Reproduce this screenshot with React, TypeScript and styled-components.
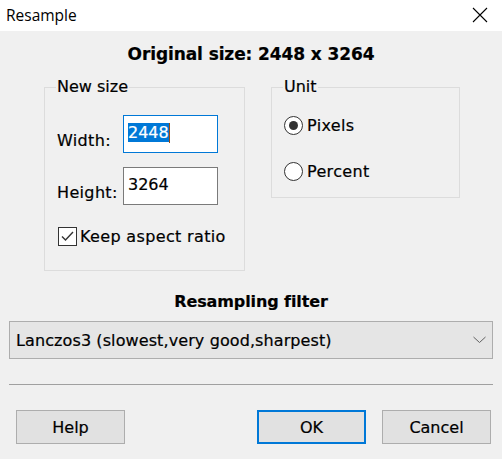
import React from "react";
import styled, { createGlobalStyle } from "styled-components";

const GlobalStyle = createGlobalStyle`
  html, body {
    margin: 0;
    padding: 0;
    background: #f0f0f0;
  }
  * {
    box-sizing: border-box;
  }
`;

const ui = `"DejaVu Sans", Verdana, sans-serif`;

const Window = styled.div`
  width: 502px;
  height: 459px;
  display: flex;
  flex-direction: column;
  font-family: ${ui};
  font-size: 16px;
  color: #000;
  background: #f0f0f0;
  overflow: hidden;
`;

const TitleBar = styled.div`
  height: 31px;
  flex: none;
  display: flex;
  align-items: center;
  justify-content: space-between;
  padding: 0 14px 2px 6px;
  background: #fff;
  font-family: "Open Sans", "Liberation Sans", sans-serif;
  font-size: 15.5px;
`;

const Body = styled.div`
  flex: 1;
  display: flex;
  flex-direction: column;
  padding: 13px 9px 0;
  -webkit-text-stroke: 0.2px #000;
`;

const Heading = styled.div<{ $size: number }>`
  text-align: center;
  font-weight: bold;
  font-size: ${(p) => p.$size}px;
  line-height: 20px;
  letter-spacing: -0.1px;
`;

const Groups = styled.div`
  display: flex;
  align-items: flex-start;
  gap: 26px;
  margin: 14px 0 0 35px;
  letter-spacing: 0.35px;
`;

const Group = styled.fieldset<{ $width: number; $top: number; $bottom: number }>`
  margin: 0;
  width: ${(p) => p.$width}px;
  padding: ${(p) => p.$top}px 12px ${(p) => p.$bottom}px 12px;
  border: 1px solid #dcdcdc;
  display: flex;
  flex-direction: column;
`;

const Legend = styled.legend`
  margin-left: -1px;
  padding: 0 1px;
  line-height: 18px;
  letter-spacing: 0;
`;

const FieldRow = styled.div<{ $gap?: number }>`
  display: flex;
  align-items: flex-end;
  margin-top: ${(p) => p.$gap ?? 0}px;
`;

const FieldLabel = styled.span`
  width: 66px;
  padding-bottom: 3px;
`;

const TextBox = styled.div<{ $focused?: boolean }>`
  width: 95px;
  height: 38px;
  padding: 7px 4px 0;
  background: #fff;
  border: 1px solid ${(p) => (p.$focused ? "#0078d7" : "#7a7a7a")};
  white-space: nowrap;
  letter-spacing: 0;
`;

const Selection = styled.span`
  background: #0078d7;
  color: #fff;
  -webkit-text-stroke: 0.2px #fff;
`;

const Caret = styled.span`
  display: inline-block;
  width: 1px;
  height: 20px;
  vertical-align: -5px;
  background: #9a4a10;
`;

const CheckRow = styled.label`
  display: flex;
  align-items: center;
  gap: 3px;
  margin-top: 22px;
  margin-left: 1px;
`;

const Box = styled.span`
  width: 19px;
  height: 19px;
  border: 1px solid #333;
  background: #fff;
  display: flex;
  align-items: center;
  justify-content: center;
`;

const RadioRow = styled.label<{ $gap?: number }>`
  display: flex;
  align-items: center;
  gap: 4px;
  margin-top: ${(p) => p.$gap ?? 0}px;
  height: 19px;
`;

const RadioDot = styled.span<{ $on?: boolean }>`
  width: 19px;
  height: 19px;
  border-radius: 50%;
  border: 1px solid #333;
  background: #fff;
  display: flex;
  align-items: center;
  justify-content: center;
  &::after {
    content: "";
    width: 9px;
    height: 9px;
    border-radius: 50%;
    background: ${(p) => (p.$on ? "#333" : "transparent")};
  }
`;

const FilterHeading = styled(Heading)`
  margin-top: 21px;
`;

const Select = styled.div`
  margin-top: 9px;
  height: 38px;
  display: flex;
  align-items: center;
  justify-content: space-between;
  padding: 0 6px 0 6px;
  background: #e5e5e5;
  border: 1px solid #adadad;
  letter-spacing: 0.1px;
`;

const Separator = styled.hr`
  margin: 25px 0 0;
  border: none;
  border-top: 1px solid #a0a0a0;
`;

const ButtonRow = styled.div`
  display: flex;
  justify-content: space-between;
  margin-top: 25px;
  padding: 0 2px 0 7px;
`;

const ButtonGroup = styled.div`
  display: flex;
  gap: 16px;
`;

const Button = styled.button<{ $default?: boolean }>`
  width: 109px;
  height: 34px;
  padding: 0;
  font: inherit;
  color: #000;
  background: #e1e1e1;
  border: ${(p) => (p.$default ? "2px solid #0078d7" : "1px solid #adadad")};
`;

export default function App() {
  return (
    <Window>
      <GlobalStyle />
      <TitleBar>
        <span>Resample</span>
        <svg width="16" height="16" viewBox="0 0 16 16">
          <path d="M1 1 L15 15 M15 1 L1 15" stroke="#000" strokeWidth="1.1" />
        </svg>
      </TitleBar>
      <Body>
        <Heading $size={17}>Original size: 2448 x 3264</Heading>
        <Groups>
          <Group $width={201} $top={19} $bottom={24}>
            <Legend>New size</Legend>
            <FieldRow>
              <FieldLabel>Width:</FieldLabel>
              <TextBox $focused>
                <Selection>2448</Selection>
                <Caret />
              </TextBox>
            </FieldRow>
            <FieldRow $gap={14}>
              <FieldLabel>Height:</FieldLabel>
              <TextBox>3264</TextBox>
            </FieldRow>
            <CheckRow>
              <Box>
                <svg width="15" height="15" viewBox="0 0 15 15">
                  <path d="M2 7.5 L5.5 11 L13 3" fill="none" stroke="#333" strokeWidth="1.4" />
                </svg>
              </Box>
              Keep aspect ratio
            </CheckRow>
          </Group>
          <Group $width={189} $top={20} $bottom={16}>
            <Legend>Unit</Legend>
            <RadioRow>
              <RadioDot $on />
              Pixels
            </RadioRow>
            <RadioRow $gap={27}>
              <RadioDot />
              Percent
            </RadioRow>
          </Group>
        </Groups>
        <FilterHeading $size={16}>Resampling filter</FilterHeading>
        <Select>
          <span>Lanczos3 (slowest,very good,sharpest)</span>
          <svg width="13" height="8" viewBox="0 0 13 8">
            <path d="M0.5 1 L6.5 6.5 L12.5 1" fill="none" stroke="#606060" strokeWidth="1" />
          </svg>
        </Select>
        <Separator />
        <ButtonRow>
          <Button>Help</Button>
          <ButtonGroup>
            <Button $default>OK</Button>
            <Button>Cancel</Button>
          </ButtonGroup>
        </ButtonRow>
      </Body>
    </Window>
  );
}
